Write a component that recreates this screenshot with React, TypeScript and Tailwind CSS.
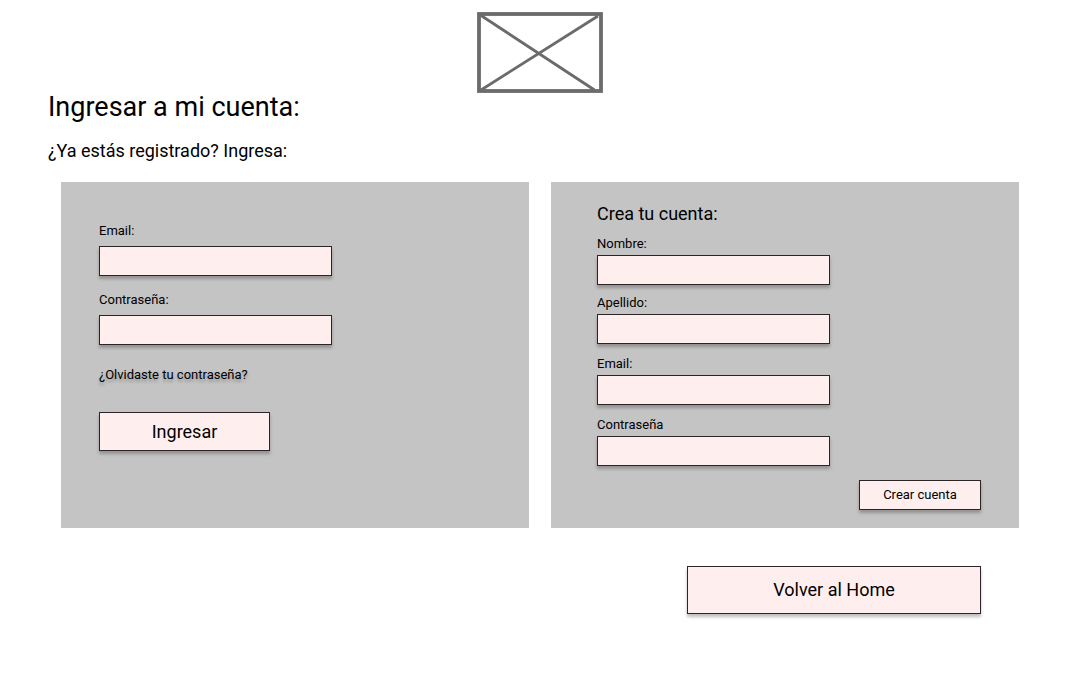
import React from "react";

const box =
  "border border-[#2b2527] bg-[#ffeeee] shadow-[0_3px_3px_rgba(0,0,0,0.25)]";

type FieldProps = {
  id: string;
  label: string;
  type?: string;
  gap: string;
};

function Field({ id, label, type = "text", gap }: FieldProps) {
  return (
    <div className={`flex flex-col items-start ${gap}`}>
      <label htmlFor={id} className="text-[13px] leading-4">
        {label}
      </label>
      <input
        id={id}
        name={id}
        type={type}
        className={`h-[30px] w-[233px] max-w-full px-2 text-[13px] ${box}`}
      />
    </div>
  );
}

function Logo() {
  return (
    <svg
      width="126"
      height="81"
      viewBox="0 0 126 81"
      fill="none"
      stroke="#6b6b6b"
      role="img"
      aria-label="Logo"
    >
      <rect x="2" y="2" width="122" height="77" strokeWidth="3.8" />
      <path d="M4 3.5 117.5 78M4 78 121 4" strokeWidth="2.8" />
    </svg>
  );
}

export default function App() {
  return (
    <div className="min-h-screen bg-white font-['Roboto',sans-serif] text-black">
      <header className="flex justify-center pt-3 pr-[62px] pl-[61px]">
        <Logo />
      </header>

      <main className="pb-8">
        <div className="px-12">
          <h1 className="text-[27px] leading-7">Ingresar a mi cuenta:</h1>
          <p className="mt-[18px] text-[18px] leading-6">
            ¿Ya estás registrado? Ingresa:
          </p>
        </div>

        <div className="mt-[19px] grid grid-cols-1 gap-[22px] pr-[62px] pl-[61px] md:grid-cols-2">
          <form
            className="flex flex-col items-start bg-[#c4c4c4] px-[38px] pt-[41px] pb-[77px]"
            onSubmit={(e) => e.preventDefault()}
          >
            <div className="flex max-w-full flex-col gap-4">
              <Field id="login-email" label="Email:" type="email" gap="gap-[7px]" />
              <Field
                id="login-password"
                label="Contraseña:"
                type="password"
                gap="gap-[7px]"
              />
            </div>
            <a
              href="#recuperar"
              className="mt-[22px] text-[13px] leading-4 [text-shadow:0_3px_3px_rgba(0,0,0,0.25)]"
            >
              ¿Olvidaste tu contraseña?
            </a>
            <button
              type="submit"
              className={`mt-[29px] h-[39px] w-[171px] text-[18px] leading-6 ${box}`}
            >
              Ingresar
            </button>
          </form>

          <form
            className="flex flex-col bg-[#c4c4c4] pt-5 pr-[38px] pb-[18px] pl-[46px]"
            onSubmit={(e) => e.preventDefault()}
          >
            <h2 className="text-[18px] leading-6">Crea tu cuenta:</h2>
            <div className="mt-[10px] flex flex-col gap-3">
              <div className="flex flex-col gap-[10px]">
                <Field id="nombre" label="Nombre:" gap="gap-[3px]" />
                <Field id="apellido" label="Apellido:" gap="gap-[3px]" />
              </div>
              <Field id="email" label="Email:" type="email" gap="gap-[3px]" />
              <Field
                id="password"
                label="Contraseña"
                type="password"
                gap="gap-[3px]"
              />
            </div>
            <button
              type="submit"
              className={`mt-auto h-[30px] w-[122px] self-end text-[13px] leading-4 ${box}`}
            >
              Crear cuenta
            </button>
          </form>
        </div>

        <div className="mt-[38px] flex justify-end pr-[100px]">
          <a
            href="#home"
            className={`flex h-12 w-[294px] items-center justify-center text-[18px] leading-6 ${box}`}
          >
            Volver al Home
          </a>
        </div>
      </main>
    </div>
  );
}
